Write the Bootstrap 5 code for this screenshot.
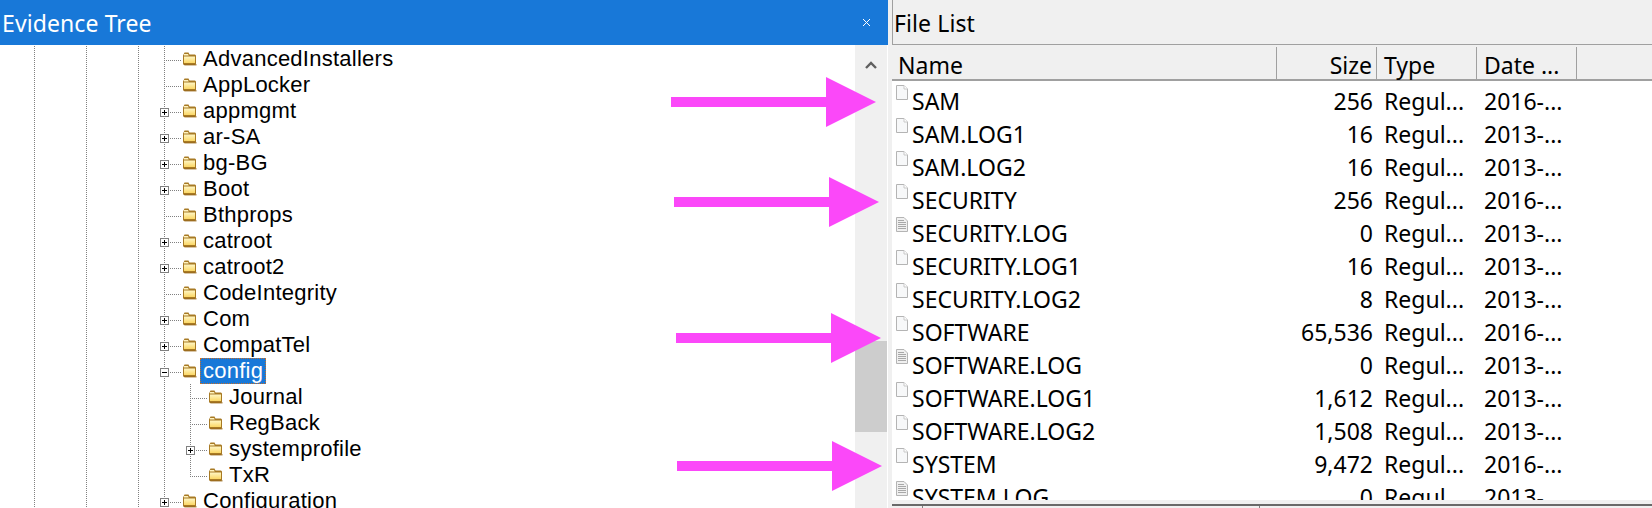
<!DOCTYPE html>
<html lang="en">
<head>
<meta charset="utf-8">
<title>Evidence Tree</title>
<link href="https://cdn.jsdelivr.net/npm/bootstrap@5.3.0/dist/css/bootstrap.min.css" rel="stylesheet">
<style>
html,body{width:1652px;height:508px;overflow:hidden;background:#f0f0f0}
.app-root{width:1652px;height:508px;position:relative}
.tree-pane{width:888px;height:508px;background:#fff}
.pane-head{height:45px;background:#1878d8;color:#fff;font:23px/45px "Noto Sans",sans-serif;padding:1px 0 0 2px;letter-spacing:.1px}
.pane-x{display:block;margin:18px 18px 0 0}
.tree-body{height:463px}
.tree-list{width:855px;padding:1px 0 0 21px;font:22px/26px "Liberation Sans",sans-serif;letter-spacing:.25px;color:#000}
.t-row{height:26px;white-space:nowrap}
.t-cell{width:26px;height:26px;flex:none}
.guide{background:repeating-linear-gradient(to bottom,#808080 0 1px,transparent 1px 2px) 13px 0/1px 100% no-repeat}
.conn{width:31px;height:26px;flex:none;background:repeating-linear-gradient(to right,#808080 0 1px,transparent 1px 2px) 13px 14px/18px 1px no-repeat}
.conn-v{background:repeating-linear-gradient(to right,#808080 0 1px,transparent 1px 2px) 13px 14px/18px 1px no-repeat,repeating-linear-gradient(to bottom,#808080 0 1px,transparent 1px 2px) 13px 0/1px 100% no-repeat}
.conn-e{background:repeating-linear-gradient(to right,#808080 0 1px,transparent 1px 2px) 13px 14px/18px 1px no-repeat,repeating-linear-gradient(to bottom,#808080 0 1px,transparent 1px 2px) 13px 0/1px 14px no-repeat}
.tbox{display:block;margin:10px 0 0 9px;background:#fff}
.tfold{flex:none;margin:5px 6px 0 0;display:block}
.t-label{display:block}
.t-sel{background:#1878d8;color:#fff;margin:0 0 0 -3px;padding:0 3px;height:26px;line-height:26px;outline:1px dotted #c8702a;outline-offset:-1px}
.sbar{width:32px;height:463px;background:#f0f0f0}
.sbar-up{height:40px}
.sbar-gap{height:256px}
.sbar-thumb{height:91px;background:#cdcdcd}
.list-pane{width:760px;margin-left:4px;height:508px}
.list-title{height:45px;border-left:1px solid #a0a0a0;border-bottom:1px solid #a0a0a0;font:23px/45px "Noto Sans",sans-serif;color:#000;padding:1px 0 0 1px;letter-spacing:.1px}
.list-head{height:34px;margin-top:2px;border-bottom:2px solid #a0a0a0;font:23px/32px "Noto Sans",sans-serif;color:#000}
.h-cell{height:32px;padding-top:2px;border-right:1px solid #a0a0a0;flex:none;white-space:nowrap}
.c-name{width:385px;padding-left:6px}
.c-size{width:100px;padding-right:4px;text-align:right}
.c-type{width:100px;padding-left:7px}
.c-date{width:100px;padding-left:7px}
.list-body{height:419px;background:#fff;padding-top:4px;font:23px/33px "Noto Sans",sans-serif;color:#000}
.f-row{height:33px;white-space:nowrap}
.f-name{width:385px;flex:none;padding-left:4px}
.f-ic{flex:none;margin-right:4px;display:block}
.f-size{width:100px;flex:none;padding-right:4px;text-align:right}
.f-type{width:100px;flex:none;padding-left:7px}
.f-date{width:100px;flex:none;padding-left:7px}
.list-foot{height:4px}
.list-scroll{height:4px;border-top:2px solid #696969}
.tick-a{width:31px;border-right:1px solid #808080;height:2px}
.tick-b{width:337px;border-right:1px solid #808080;height:2px}
.arrows{position:absolute;left:0;top:0;pointer-events:none}
</style>
</head>
<body>
<svg width="0" height="0" class="d-block">
  <defs>
    <linearGradient id="fg" x1="0" y1="0" x2="0" y2="1"><stop offset="0" stop-color="#fff6c4"/><stop offset="1" stop-color="#fbd765"/></linearGradient>
    <symbol id="folder" viewBox="0 0 15 15">
      <path d="M1.5 3.5 L2.5 1.5 H6.5 L7.5 3.5 H13 L14 4.5 V13 L13 14 H2 L1 13 V4.5Z" fill="#a87a24"/>
      <path d="M2 5.5 H13 V12 H2Z" fill="url(#fg)"/>
      <path d="M2 3 H6 L6.8 4.5 H2Z" fill="#fff3bf"/>
      <path d="M1.5 13 H14.5 V14.5 H2.5Z" fill="#9a6a1c" opacity=".75"/>
    </symbol>
    <symbol id="plus" viewBox="0 0 9 9">
      <rect x=".5" y=".5" width="8" height="8" fill="#fff" stroke="#808080"/>
      <path d="M2 4.5H7M4.5 2V7" stroke="#000"/>
    </symbol>
    <symbol id="minus" viewBox="0 0 9 9">
      <rect x=".5" y=".5" width="8" height="8" fill="#fff" stroke="#808080"/>
      <path d="M2 4.5H7" stroke="#000"/>
    </symbol>
    <symbol id="doc" viewBox="0 0 12 15">
      <path d="M.5.5H8L11.5 4V14.5H.5Z" fill="#f7f8f9" stroke="#b4b4b4"/>
      <path d="M8 .5V4H11.5" fill="#fff" stroke="#c8c8c8"/>
    </symbol>
    <symbol id="doctext" viewBox="0 0 12 15">
      <path d="M.5.5H8L11.5 4V14.5H.5Z" fill="#f0f0f0" stroke="#b4b4b4"/>
      <path d="M2 3.5H8M2 5.5H10M2 7.5H10M2 9.5H10M2 11.5H10" stroke="#a8a8a8"/>
    </symbol>
  </defs>
</svg>
<div class="app-root d-flex">
  <section class="tree-pane d-flex flex-column">
    <div class="pane-head d-flex justify-content-between">
      <span>Evidence Tree</span>
      <svg class="pane-x" width="7" height="7" viewBox="0 0 7 7"><path d="M0 0L7 7M7 0L0 7" stroke="#fff" stroke-width="1"/></svg>
    </div>
    <div class="tree-body d-flex overflow-hidden">
      <div class="tree-list overflow-hidden" id="tree"></div>
      <div class="sbar d-flex flex-column">
        <div class="sbar-up d-flex justify-content-center align-items-center">
          <svg width="14" height="10" viewBox="0 0 14 10"><path d="M2 8 L7 3 L12 8" fill="none" stroke="#606060" stroke-width="2.4"/></svg>
        </div>
        <div class="sbar-gap"></div>
        <div class="sbar-thumb"></div>
      </div>
    </div>
  </section>
  <section class="list-pane d-flex flex-column">
    <div class="list-title">File List</div>
    <div class="list-head d-flex">
      <div class="h-cell c-name">Name</div>
      <div class="h-cell c-size">Size</div>
      <div class="h-cell c-type">Type</div>
      <div class="h-cell c-date">Date ...</div>
    </div>
    <div class="list-body overflow-hidden" id="files"></div>
    <div class="list-foot"></div>
    <div class="list-scroll d-flex"><div class="tick-a"></div><div class="tick-b"></div></div>
  </section>
  <svg class="arrows" width="1652" height="508" viewBox="0 0 1652 508">
    <path fill="#fb48f9" d="M671 97H826V77L876 102L826 127V107H671Z"/>
    <path fill="#fb48f9" d="M674 197H829V177L879 202L829 227V207H674Z"/>
    <path fill="#fb48f9" d="M676 333H831V313L881 338L831 363V343H676Z"/>
    <path fill="#fb48f9" d="M677 461H832V441L882 466L832 491V471H677Z"/>
  </svg>
</div>
<script src="https://cdn.jsdelivr.net/npm/bootstrap@5.3.0/dist/js/bootstrap.bundle.min.js"></script>
<script>
var rows=[["AdvancedInstallers",0,""],["AppLocker",0,""],["appmgmt",0,"plus"],["ar-SA",0,"plus"],["bg-BG",0,"plus"],["Boot",0,"plus"],["Bthprops",0,""],["catroot",0,"plus"],["catroot2",0,"plus"],["CodeIntegrity",0,""],["Com",0,"plus"],["CompatTel",0,"plus"],["config",0,"minus"],["Journal",1,""],["RegBack",1,""],["systemprofile",1,"plus"],["TxR",2,""],["Configuration",0,"plus"]];
var guides=[1,0,1,0,1];
document.getElementById('tree').innerHTML=rows.map(function(r){
  var h=guides.map(function(g){return '<div class="t-cell'+(g?' guide':'')+'"></div>';}).join('');
  var box=r[2]?'<svg class="tbox" width="9" height="9"><use href="#'+r[2]+'"/></svg>':'';
  if(r[1]===0){h+='<div class="conn conn-v">'+box+'</div>';}
  else{h+='<div class="t-cell guide"></div><div class="conn '+(r[1]===2?'conn-e':'conn-v')+'">'+box+'</div>';}
  var sel=r[0]==='config';
  return '<div class="t-row d-flex">'+h+'<svg class="tfold" width="15" height="15"><use href="#folder"/></svg><span class="t-label'+(sel?' t-sel':'')+'">'+r[0]+'</span></div>';
}).join('');
var files=[["SAM","256","2016-...",0],["SAM.LOG1","16","2013-...",0],["SAM.LOG2","16","2013-...",0],["SECURITY","256","2016-...",0],["SECURITY.LOG","0","2013-...",1],["SECURITY.LOG1","16","2013-...",0],["SECURITY.LOG2","8","2013-...",0],["SOFTWARE","65,536","2016-...",0],["SOFTWARE.LOG","0","2013-...",1],["SOFTWARE.LOG1","1,612","2013-...",0],["SOFTWARE.LOG2","1,508","2013-...",0],["SYSTEM","9,472","2016-...",0],["SYSTEM.LOG","0","2013-...",1]];
document.getElementById('files').innerHTML=files.map(function(f){
  return '<div class="f-row d-flex"><div class="f-name d-flex"><svg class="f-ic" width="12" height="15"><use href="#'+(f[3]?'doctext':'doc')+'"/></svg><span>'+f[0]+'</span></div><div class="f-size">'+f[1]+'</div><div class="f-type">Regul...</div><div class="f-date">'+f[2]+'</div></div>';
}).join('');
</script>
</body>
</html>
